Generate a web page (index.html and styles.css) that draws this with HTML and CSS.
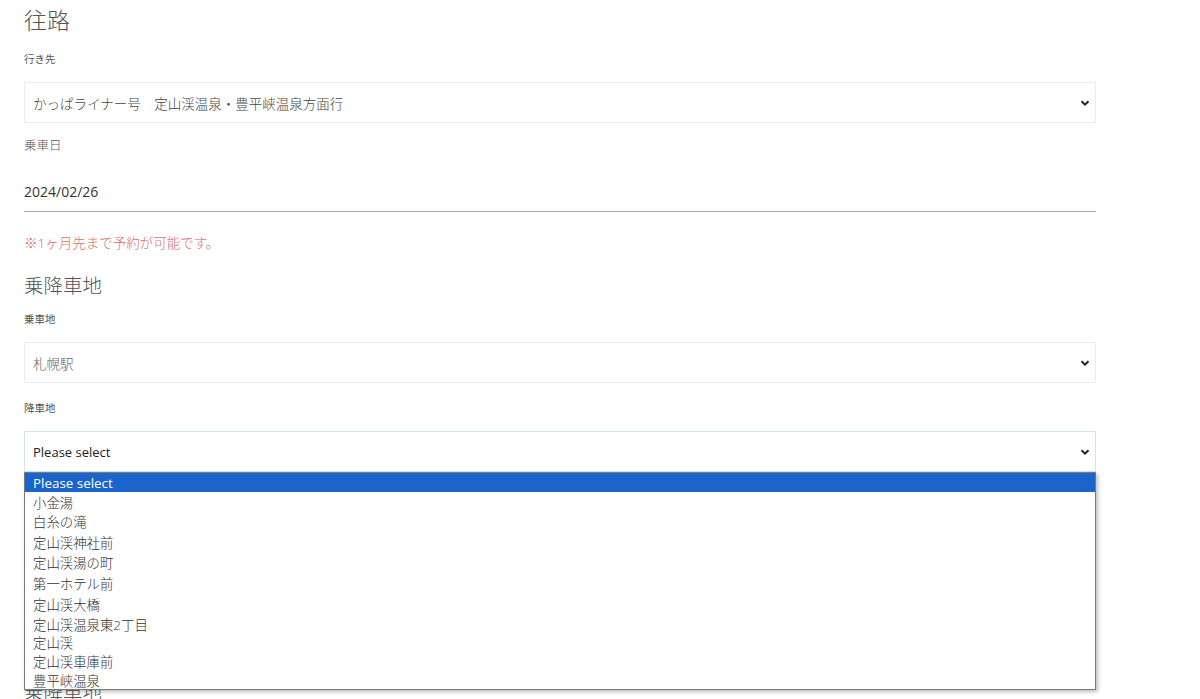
FILE: index.html
```html
<!DOCTYPE html>
<html lang="ja">
<head>
<meta charset="utf-8">
<title>往路</title>
<link rel="stylesheet" href="styles.css">
</head>
<body>
<div class="page">
  <h2 class="title">往路</h2>

  <div class="label label-sm">行き先</div>
  <div class="select">
    <span class="select-text">かっぱライナー号　定山渓温泉・豊平峡温泉方面行</span>
    <svg class="chev" width="10" height="8" viewBox="0 0 10 8"><path d="M1.5 2.2 L5 5.6 L8.5 2.2" fill="none" stroke="#222" stroke-width="2"/></svg>
  </div>

  <div class="label label-md">乗車日</div>
  <div class="date">2024/02/26</div>
  <div class="note">※1ヶ月先まで予約が可能です。</div>

  <h3 class="subtitle">乗降車地</h3>

  <div class="label label-sm label-tight">乗車地</div>
  <div class="select">
    <span class="select-text muted">札幌駅</span>
    <svg class="chev" width="10" height="8" viewBox="0 0 10 8"><path d="M1.5 2.2 L5 5.6 L8.5 2.2" fill="none" stroke="#222" stroke-width="2"/></svg>
  </div>

  <div class="label label-sm label-gap">降車地</div>
  <div class="select-wrap">
    <div class="select focused">
      <span class="select-text latin">Please select</span>
      <svg class="chev" width="10" height="8" viewBox="0 0 10 8"><path d="M1.5 2.2 L5 5.6 L8.5 2.2" fill="none" stroke="#222" stroke-width="2"/></svg>
    </div>
    <ul class="dropdown">
      <li class="opt active h19">Please select</li>
      <li class="opt h19">小金湯</li>
      <li class="opt h20">白糸の滝</li>
      <li class="opt h21">定山渓神社前</li>
      <li class="opt h20">定山渓湯の町</li>
      <li class="opt h22">第一ホテル前</li>
      <li class="opt h20">定山渓大橋</li>
      <li class="opt h19">定山渓温泉東2丁目</li>
      <li class="opt h18">定山渓</li>
      <li class="opt h19">定山渓車庫前</li>
      <li class="opt h19">豊平峡温泉</li>
    </ul>
  </div>

  <h3 class="subtitle subtitle-low">乗降車地</h3>
  <div class="label label-sm">乗車地</div>
</div>
</body>
</html>
```

FILE: styles.css
```css
* { box-sizing: border-box; }

html, body {
  margin: 0;
  padding: 0;
  background: #ffffff;
}

body {
  font-family: "Open Sans", "Noto Sans CJK JP", sans-serif;
  font-weight: 300;
  color: #333;
  overflow: hidden;
}

.page {
  width: 1096px;
  padding: 0 0 0 24px;
}

.title {
  margin: 4px 0 0;
  font-size: 23px;
  line-height: 32px;
  font-weight: 300;
  color: #555;
}

.subtitle {
  margin: 20px 0 0;
  font-size: 19.5px;
  line-height: 28px;
  font-weight: 300;
  color: #555;
}

.subtitle-low {
  margin-top: 206px;
}

.label {
  color: #555;
}

.label-sm {
  margin-top: 15px;
  font-size: 10.5px;
  line-height: 16px;
  font-weight: 400;
}

.label-tight { margin-top: 11px; }
.label-gap { margin-top: 17px; }

.label-md {
  margin-top: 14px;
  font-size: 12.5px;
  line-height: 18px;
}

.select {
  margin-top: 15px;
  height: 41px;
  border: 1px solid #ececec;
  display: flex;
  align-items: center;
  justify-content: space-between;
  padding: 0 5px 0 8px;
  background: #fff;
}

.select.focused {
  border-color: #d3e6e6;
}

.select-text {
  font-size: 13.5px;
  color: #444;
  white-space: nowrap;
}

.select-text.muted { color: #666; }

.select-text.latin {
  font-size: 13px;
  font-weight: 400;
  color: #222;
}

.chev {
  display: block;
}

.date {
  margin-top: 16px;
  height: 41px;
  display: flex;
  align-items: center;
  font-size: 14px;
  font-weight: 400;
  color: #333;
  border-bottom: 1px solid #a8a8a8;
}

.note {
  margin-top: 22px;
  font-size: 13.5px;
  line-height: 18px;
  color: #d4706c;
}

.select-wrap {
  position: relative;
  margin-top: 15px;
}

.select-wrap .select {
  margin-top: 0;
}

.dropdown {
  position: absolute;
  left: 0;
  right: 0;
  top: 41px;
  margin: 0;
  padding: 0;
  list-style: none;
  background: #fff;
  border: 1px solid #7a7a7a;
  box-shadow: 2px 2px 4px rgba(0, 0, 0, 0.25);
  z-index: 10;
}

.opt {
  display: flex;
  align-items: center;
  padding: 0 8px;
  font-size: 13.4px;
  color: #333;
  white-space: nowrap;
}

.opt.active {
  background: #1a64cc;
  color: #fff;
  font-weight: 400;
}

.h18 { height: 18px; }
.h19 { height: 19px; }
.h20 { height: 20px; }
.h21 { height: 21px; }
.h22 { height: 22px; }
```
